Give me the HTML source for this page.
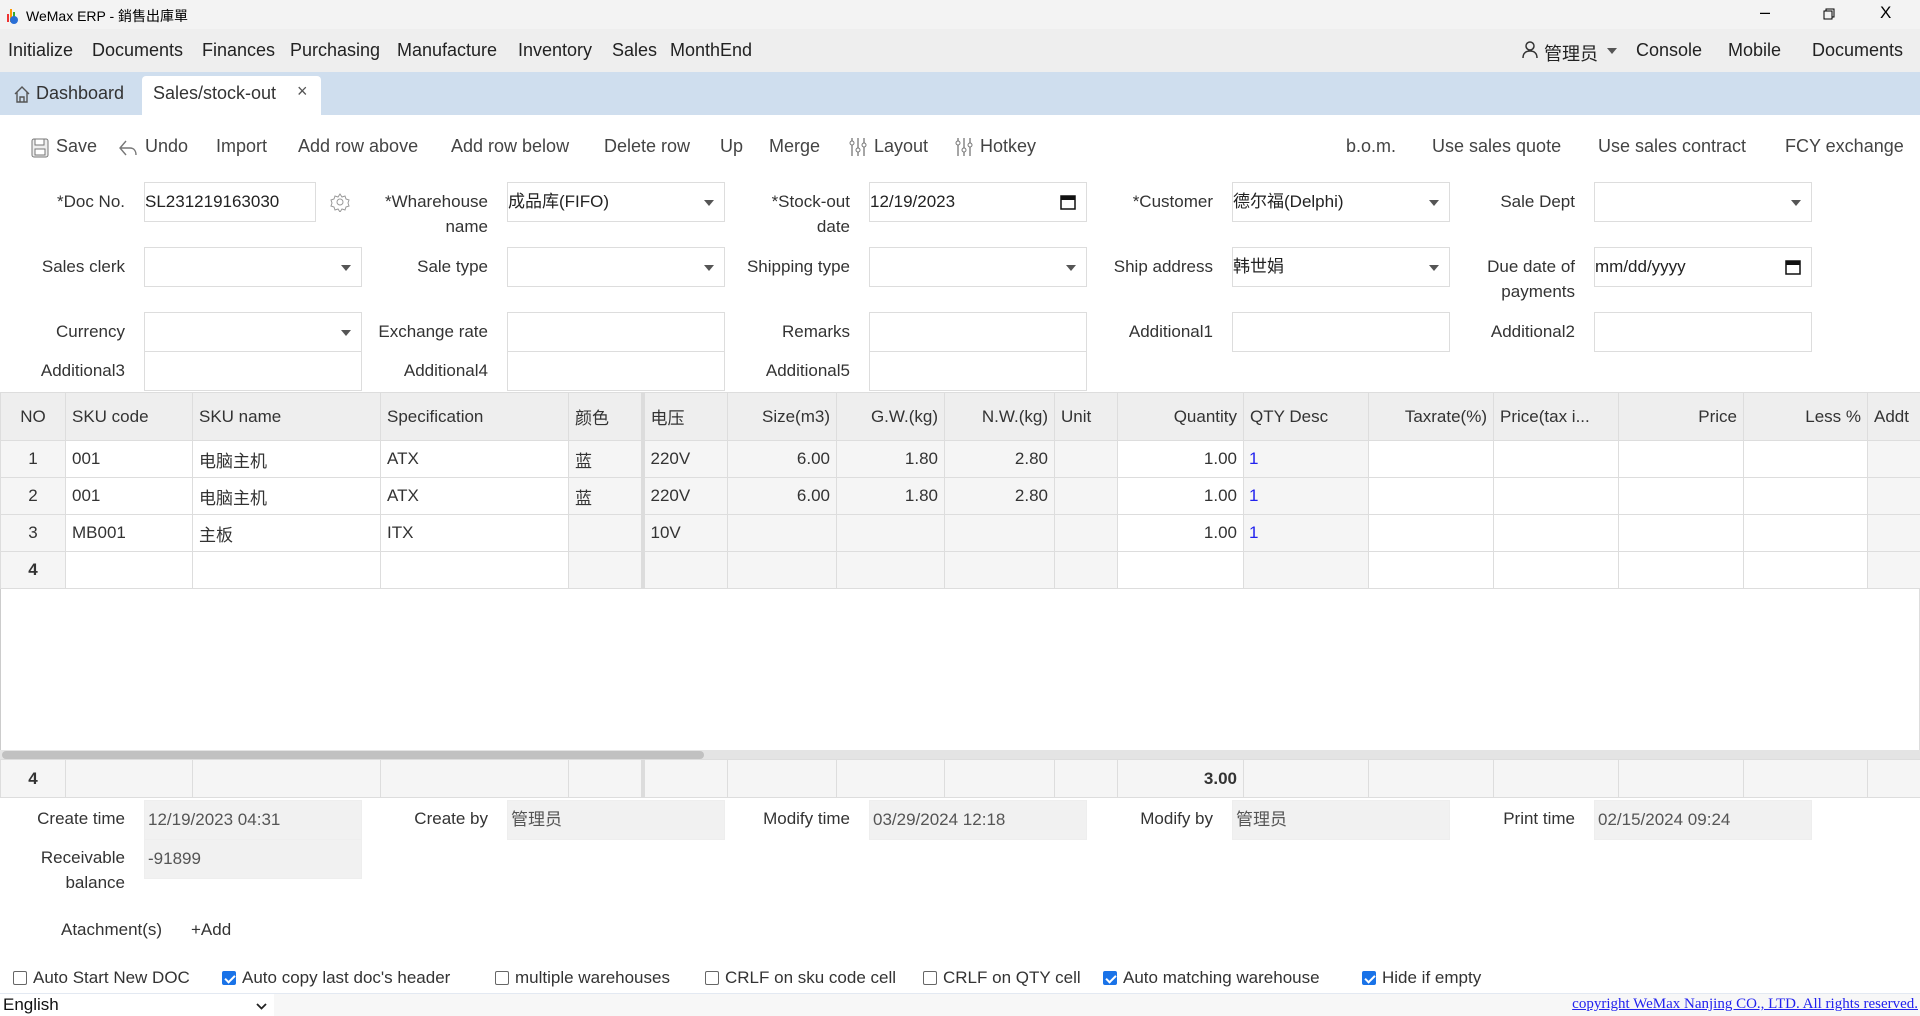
<!DOCTYPE html>
<html><head><meta charset="utf-8"><style>
*{box-sizing:border-box;margin:0;padding:0}
body{width:1920px;height:1016px;overflow:hidden;background:#fff;font-family:"Liberation Sans","Noto Sans CJK SC",sans-serif;font-size:17px;color:#333;position:relative}
.abs{position:absolute}
#title{top:0;left:0;width:1920px;height:29px;background:#f3f3f3;font-size:14px;color:#000}
#menu{top:29px;left:0;width:1920px;height:43px;background:#eeeeee}
#menu span{position:absolute;top:11px;font-size:18px;color:#222}
#tabs{top:72px;left:0;width:1920px;height:43px;background:#cfdeee}
.tb{position:absolute;top:136px;font-size:18px;color:#444}
.lbl{position:absolute;text-align:right;width:140px;font-size:17px;color:#333;line-height:25px}
.inp{position:absolute;height:40px;width:218px;border:1px solid #ddd;background:#fff;font-size:17px;padding:0 0 0 0;line-height:38px;color:#222}
.inp.sel::after{content:"";position:absolute;right:10px;top:17px;border-left:5px solid transparent;border-right:5px solid transparent;border-top:6px solid #555}
.inp.ro{background:#f1f1f1;color:#555;padding-left:3px}
table{position:absolute;left:0;border-collapse:collapse;table-layout:fixed;width:1920px}
td,th{border:1px solid #ddd;font-size:17px;font-weight:normal;white-space:nowrap;overflow:hidden;padding:0 6px;color:#333}
th{background:#eeeeee;height:48px;text-align:left}
td{height:37px}
.g{background:#f5f5f5}.r{text-align:right}.c{text-align:center}
.v{border-left:4px solid #dcdcdc}
a{color:#2222ee}
.cb{position:absolute;top:968px;font-size:17px;color:#333}
.box{display:inline-block;width:14px;height:14px;border:1px solid #666;border-radius:2px;vertical-align:-2px;margin-right:6px;background:#fff}
.box.on{background:#1a73e8;border-color:#1a73e8;position:relative}
.box.on::after{content:"";position:absolute;left:4px;top:1px;width:4px;height:8px;border:solid #fff;border-width:0 2px 2px 0;transform:rotate(45deg)}
</style></head><body>

<div id="title" class="abs">
<svg class="abs" style="left:6px;top:6px" width="14" height="18"><rect x="1" y="8" width="2" height="8" fill="#e33"/><rect x="4" y="3" width="2" height="13" fill="#f90"/><rect x="7" y="6" width="2" height="10" fill="#3a3"/><circle cx="8" cy="14" r="4" fill="#2a6fd6"/></svg>
<span class="abs" style="left:26px;top:6px">WeMax ERP - 銷售出庫單</span>
<span class="abs" style="left:1760px;top:2px;font-size:18px">–</span>
<svg class="abs" style="left:1823px;top:8px" width="12" height="12"><rect x="1" y="3" width="8" height="8" fill="none" stroke="#000"/><path d="M3 3V1h8v8H9" fill="none" stroke="#000"/></svg>
<span class="abs" style="left:1880px;top:3px;font-size:17px">X</span>
</div>

<div id="menu" class="abs">
<span style="left:8px">Initialize</span><span style="left:92px">Documents</span><span style="left:202px">Finances</span><span style="left:290px">Purchasing</span><span style="left:397px">Manufacture</span><span style="left:518px">Inventory</span><span style="left:612px">Sales</span><span style="left:670px">MonthEnd</span>
<svg class="abs" style="left:1522px;top:12px" width="16" height="18"><circle cx="8" cy="5" r="4" fill="none" stroke="#333" stroke-width="1.5"/><path d="M1 17c0-5 3-7 7-7s7 2 7 7" fill="none" stroke="#333" stroke-width="1.5"/></svg>
<span style="left:1544px">管理员</span>
<svg class="abs" style="left:1607px;top:19px" width="10" height="6"><path d="M0 0h10L5 6z" fill="#555"/></svg>
<span style="left:1636px">Console</span><span style="left:1728px">Mobile</span><span style="left:1812px">Documents</span>
</div>

<div id="tabs" class="abs">
<svg class="abs" style="left:13px;top:13px" width="18" height="18"><path d="M2 9L9 2l7 7M4 7v10h10V7M7 17v-5h4v5" fill="none" stroke="#555" stroke-width="1.4"/></svg>
<span class="abs" style="left:36px;top:11px;font-size:18px;color:#333">Dashboard</span>
<div class="abs" style="left:142px;top:4px;width:179px;height:39px;background:#fff;border-radius:4px 4px 0 0"></div>
<span class="abs" style="left:153px;top:11px;font-size:18px;color:#333">Sales/stock-out</span>
<span class="abs" style="left:297px;top:9px;font-size:18px;color:#555">×</span>
</div>

<svg class="abs" style="left:31px;top:138px" width="18" height="20"><rect x="1" y="1" width="16" height="18" rx="2" fill="#eee" stroke="#777"/><rect x="4" y="1" width="9" height="6" fill="#fff" stroke="#777"/><rect x="4" y="11" width="10" height="6" fill="#fff" stroke="#777"/></svg>
<span class="tb" style="left:56px">Save</span>
<svg class="abs" style="left:118px;top:139px" width="20" height="18"><path d="M8 2L2 9l6 7M2 9h10c4 0 6 3 6 7" fill="none" stroke="#777" stroke-width="1.4"/></svg>
<span class="tb" style="left:145px">Undo</span>
<span class="tb" style="left:216px">Import</span>
<span class="tb" style="left:298px">Add row above</span>
<span class="tb" style="left:451px">Add row below</span>
<span class="tb" style="left:604px">Delete row</span>
<span class="tb" style="left:720px">Up</span>
<span class="tb" style="left:769px">Merge</span>
<svg class="abs" style="left:849px;top:137px" width="18" height="20"><path d="M3 1v18M9 1v18M15 1v18" stroke="#777" stroke-width="1.3"/><circle cx="3" cy="6" r="2" fill="#fff" stroke="#777"/><circle cx="9" cy="13" r="2" fill="#fff" stroke="#777"/><circle cx="15" cy="8" r="2" fill="#fff" stroke="#777"/></svg>
<span class="tb" style="left:874px">Layout</span>
<svg class="abs" style="left:955px;top:137px" width="18" height="20"><path d="M3 1v18M9 1v18M15 1v18" stroke="#777" stroke-width="1.3"/><circle cx="3" cy="6" r="2" fill="#fff" stroke="#777"/><circle cx="9" cy="13" r="2" fill="#fff" stroke="#777"/><circle cx="15" cy="8" r="2" fill="#fff" stroke="#777"/></svg>
<span class="tb" style="left:980px">Hotkey</span>
<span class="tb" style="left:1346px">b.o.m.</span>
<span class="tb" style="left:1432px">Use sales quote</span>
<span class="tb" style="left:1598px">Use sales contract</span>
<span class="tb" style="left:1785px">FCY exchange</span>

<!-- form row1 -->
<div class="lbl" style="left:-15px;top:189px">*Doc No.</div>
<div class="inp" style="left:144px;top:182px;width:172px"> SL231219163030</div>
<svg class="abs" style="left:330px;top:192px" width="20" height="20"><circle cx="10" cy="10" r="3" fill="none" stroke="#999"/><path d="M10 2l2 3 3-1 1 3 3 1-1 3 1 3-3 1-1 3-3-1-2 3-2-3-3 1-1-3-3-1 1-3-1-3 3-1 1-3 3 1z" fill="none" stroke="#999"/></svg>
<div class="lbl" style="left:348px;top:189px">*Wharehouse<br>name</div>
<div class="inp sel" style="left:507px;top:182px"> 成品库(FIFO)</div>
<div class="lbl" style="left:710px;top:189px">*Stock-out<br>date</div>
<div class="inp" style="left:869px;top:182px"> 12/19/2023<svg class="abs" style="right:10px;top:11px" width="16" height="16"><rect x="1" y="2" width="14" height="13" fill="none" stroke="#111" stroke-width="1.5"/><rect x="1" y="2" width="14" height="4" fill="#111"/></svg></div>
<div class="lbl" style="left:1073px;top:189px">*Customer</div>
<div class="inp sel" style="left:1232px;top:182px"> 德尔福(Delphi)</div>
<div class="lbl" style="left:1435px;top:189px">Sale Dept</div>
<div class="inp sel" style="left:1594px;top:182px"></div>
<!-- row2 -->
<div class="lbl" style="left:-15px;top:254px">Sales clerk</div>
<div class="inp sel" style="left:144px;top:247px"></div>
<div class="lbl" style="left:348px;top:254px">Sale type</div>
<div class="inp sel" style="left:507px;top:247px"></div>
<div class="lbl" style="left:710px;top:254px">Shipping type</div>
<div class="inp sel" style="left:869px;top:247px"></div>
<div class="lbl" style="left:1073px;top:254px">Ship address</div>
<div class="inp sel" style="left:1232px;top:247px"> 韩世娟</div>
<div class="lbl" style="left:1435px;top:254px">Due date of<br>payments</div>
<div class="inp" style="left:1594px;top:247px"> mm/dd/yyyy<svg class="abs" style="right:10px;top:11px" width="16" height="16"><rect x="1" y="2" width="14" height="13" fill="none" stroke="#111" stroke-width="1.5"/><rect x="1" y="2" width="14" height="4" fill="#111"/></svg></div>
<!-- row3 -->
<div class="lbl" style="left:-15px;top:319px">Currency</div>
<div class="inp sel" style="left:144px;top:312px"></div>
<div class="lbl" style="left:348px;top:319px">Exchange rate</div>
<div class="inp" style="left:507px;top:312px"></div>
<div class="lbl" style="left:710px;top:319px">Remarks</div>
<div class="inp" style="left:869px;top:312px"></div>
<div class="lbl" style="left:1073px;top:319px">Additional1</div>
<div class="inp" style="left:1232px;top:312px"></div>
<div class="lbl" style="left:1435px;top:319px">Additional2</div>
<div class="inp" style="left:1594px;top:312px"></div>
<!-- row4 -->
<div class="lbl" style="left:-15px;top:358px">Additional3</div>
<div class="inp" style="left:144px;top:351px"></div>
<div class="lbl" style="left:348px;top:358px">Additional4</div>
<div class="inp" style="left:507px;top:351px"></div>
<div class="lbl" style="left:710px;top:358px">Additional5</div>
<div class="inp" style="left:869px;top:351px"></div>

<div class="abs" style="left:0;top:392px;width:1920px;height:406px;border:1px solid #ddd;border-left:1px solid #ccc"></div>
<table style="top:392px">
<colgroup><col style="width:65px"><col style="width:127px"><col style="width:188px"><col style="width:188px"><col style="width:74px"><col style="width:85px"><col style="width:109px"><col style="width:108px"><col style="width:110px"><col style="width:63px"><col style="width:126px"><col style="width:125px"><col style="width:125px"><col style="width:125px"><col style="width:125px"><col style="width:124px"><col style="width:53px"></colgroup>
<tr><th class="c">NO</th><th>SKU code</th><th>SKU name</th><th>Specification</th><th>颜色</th><th class="v">电压</th><th class="r">Size(m3)</th><th class="r">G.W.(kg)</th><th class="r">N.W.(kg)</th><th>Unit</th><th class="r">Quantity</th><th>QTY Desc</th><th class="r">Taxrate(%)</th><th>Price(tax i...</th><th class="r">Price</th><th class="r">Less %</th><th>Addt</th></tr>
<tr><td class="g c">1</td><td>001</td><td>电脑主机</td><td>ATX</td><td class="g">蓝</td><td class="g v">220V</td><td class="g r">6.00</td><td class="g r">1.80</td><td class="g r">2.80</td><td class="g"></td><td class="r">1.00</td><td class="g" style="padding-left:5px"><a>1</a></td><td></td><td></td><td></td><td></td><td class="g"></td></tr>
<tr><td class="g c">2</td><td>001</td><td>电脑主机</td><td>ATX</td><td class="g">蓝</td><td class="g v">220V</td><td class="g r">6.00</td><td class="g r">1.80</td><td class="g r">2.80</td><td class="g"></td><td class="r">1.00</td><td class="g" style="padding-left:5px"><a>1</a></td><td></td><td></td><td></td><td></td><td class="g"></td></tr>
<tr><td class="g c">3</td><td>MB001</td><td>主板</td><td>ITX</td><td class="g"></td><td class="g v">10V</td><td class="g r"></td><td class="g r"></td><td class="g r"></td><td class="g"></td><td class="r">1.00</td><td class="g" style="padding-left:5px"><a>1</a></td><td></td><td></td><td></td><td></td><td class="g"></td></tr>
<tr><td class="g c" style="font-weight:bold">4</td><td></td><td></td><td></td><td class="g"></td><td class="g v"></td><td class="g"></td><td class="g"></td><td class="g"></td><td class="g"></td><td></td><td class="g"></td><td></td><td></td><td></td><td></td><td class="g"></td></tr>
</table>
<div class="abs" style="left:0;top:750px;width:1920px;height:9px;background:#e4e4e4"></div>
<div class="abs" style="left:2px;top:751px;width:702px;height:8px;background:#c1c1c1;border-radius:4px"></div>
<table style="top:759px">
<colgroup><col style="width:65px"><col style="width:127px"><col style="width:188px"><col style="width:188px"><col style="width:74px"><col style="width:85px"><col style="width:109px"><col style="width:108px"><col style="width:110px"><col style="width:63px"><col style="width:126px"><col style="width:125px"><col style="width:125px"><col style="width:125px"><col style="width:125px"><col style="width:124px"><col style="width:53px"></colgroup>
<tr><td class="g c" style="height:38px;font-weight:bold">4</td><td class="g"></td><td class="g"></td><td class="g"></td><td class="g"></td><td class="g v"></td><td class="g"></td><td class="g"></td><td class="g"></td><td class="g"></td><td class="g r" style="font-weight:bold">3.00</td><td class="g"></td><td class="g"></td><td class="g"></td><td class="g"></td><td class="g"></td><td class="g"></td></tr>
</table>

<div class="lbl" style="left:-15px;top:806px">Create time</div>
<div class="inp ro" style="left:144px;top:800px;border-color:#eee">12/19/2023 04:31</div>
<div class="lbl" style="left:348px;top:806px">Create by</div>
<div class="inp ro" style="left:507px;top:800px;border-color:#eee">管理员</div>
<div class="lbl" style="left:710px;top:806px">Modify time</div>
<div class="inp ro" style="left:869px;top:800px;border-color:#eee">03/29/2024 12:18</div>
<div class="lbl" style="left:1073px;top:806px">Modify by</div>
<div class="inp ro" style="left:1232px;top:800px;border-color:#eee">管理员</div>
<div class="lbl" style="left:1435px;top:806px">Print time</div>
<div class="inp ro" style="left:1594px;top:800px;border-color:#eee">02/15/2024 09:24</div>
<div class="lbl" style="left:-15px;top:845px">Receivable<br>balance</div>
<div class="inp ro" style="left:144px;top:839px;border-color:#eee">-91899</div>

<span class="abs" style="left:61px;top:920px;font-size:17px">Atachment(s)</span>
<span class="abs" style="left:191px;top:920px;font-size:17px">+Add</span>

<div class="cb" style="left:13px"><span class="box"></span>Auto Start New DOC</div>
<div class="cb" style="left:222px"><span class="box on"></span>Auto copy last doc's header</div>
<div class="cb" style="left:495px"><span class="box"></span>multiple warehouses</div>
<div class="cb" style="left:705px"><span class="box"></span>CRLF on sku code cell</div>
<div class="cb" style="left:923px"><span class="box"></span>CRLF on QTY cell</div>
<div class="cb" style="left:1103px"><span class="box on"></span>Auto matching warehouse</div>
<div class="cb" style="left:1362px"><span class="box on"></span>Hide if empty</div>

<div class="abs" style="left:0;top:993px;width:1920px;height:23px;background:#f7f7f7;border-top:1px solid #e3e9f2"></div>
<div class="abs" style="left:0;top:994px;width:274px;height:22px;background:#fff"></div>
<span class="abs" style="left:3px;top:995px;font-size:17px;color:#111">English</span>
<svg class="abs" style="left:256px;top:1003px" width="11" height="7"><path d="M1 1l4.5 4.5L10 1" fill="none" stroke="#222" stroke-width="1.8"/></svg>
<a class="abs" style="right:2px;top:996px;font-family:'Liberation Serif',serif;font-size:15px;text-decoration:underline">copyright WeMax Nanjing CO., LTD. All rights reserved.</a>
</body></html>
